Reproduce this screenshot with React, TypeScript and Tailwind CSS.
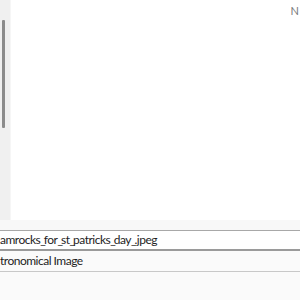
import React from 'react';

const font = { fontFamily: 'Lato, "Noto Sans", sans-serif' };

// narrow underscores like the system UI font
const FileName = ({ text }: { text: string }) => (
  <>
    {text.split('_').map((part, i, arr) => (
      <React.Fragment key={i}>
        {part}
        {i < arr.length - 1 && <span className="tracking-[-2px]">_</span>}
      </React.Fragment>
    ))}
  </>
);

export default function App() {
  return (
    <div className="w-[300px] h-[300px] overflow-hidden bg-white flex flex-col" style={font}>
      {/* upper panel */}
      <div className="h-[220px] flex">
        <div className="w-[11px] bg-[#f0f0f0] border-r border-[#f6f6f6] pt-[20px] pl-[2px]">
          <div className="w-[3px] h-[108px] bg-[#8c8c8c] rounded-[1px]" />
        </div>
        <div className="flex-1 flex justify-end overflow-hidden">
          <span className="text-[11px] leading-none text-[#7a7a7a] mt-[5px] mr-[1px]">N</span>
        </div>
      </div>

      {/* properties area */}
      <div className="flex-1 bg-[#fafafa] flex flex-col">
        <div className="h-[10px] bg-[#f8f8f8]" />
        <div className="h-[21px] bg-white border-t border-[#a8a8a8] border-b-2 border-b-[#9a9a9a] flex items-center">
          <span className="text-[12px] text-[#1e1e1e] leading-none whitespace-nowrap tracking-[-0.5px]">
            <FileName text="amrocks_for_st_patricks_day_.jpeg" />
          </span>
        </div>
        <div className="h-[21px] bg-[#fafafa] border-b border-[#c8c8c8] flex items-center">
          <span className="text-[12px] text-[#1e1e1e] leading-none whitespace-nowrap tracking-[-0.5px]">tronomical Image</span>
        </div>
      </div>
    </div>
  );
}
